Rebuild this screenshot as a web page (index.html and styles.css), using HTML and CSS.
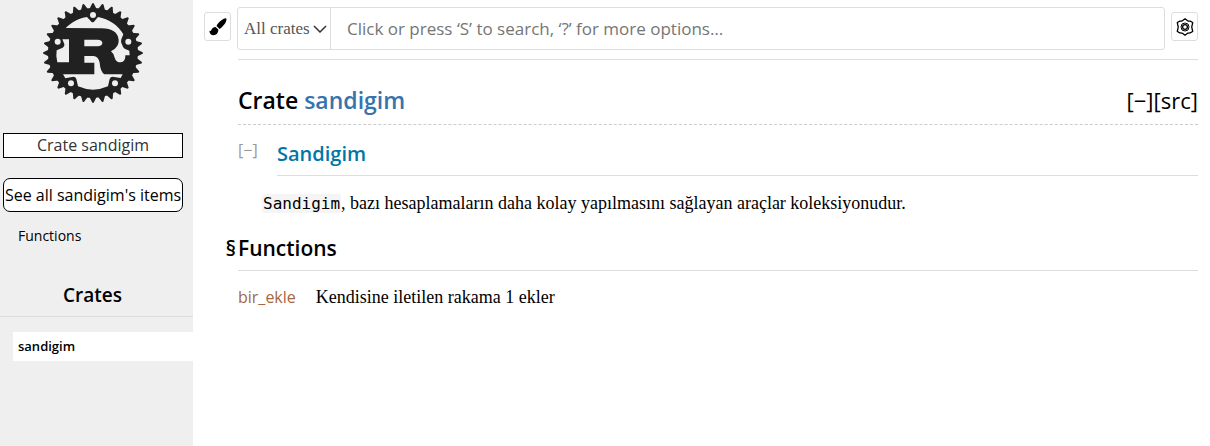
FILE: index.html
```html
<!DOCTYPE html>
<html lang="tr">
<head>
<meta charset="utf-8">
<meta name="viewport" content="width=device-width, initial-scale=1">
<title>sandigim - Rust</title>
<link rel="stylesheet" href="styles.css">
</head>
<body>
<aside class="sidebar">
  <a class="logo" href="#" aria-label="Rust">
    <svg width="100" height="100" viewBox="0 0 100 100" aria-hidden="true">
      <defs>
        <path id="tooth" d="M45.4 8 49.2.4Q50-.3 50.8.4L54.6 8z"/>
        <g id="teeth">
          <use href="#tooth"/>
          <use href="#tooth" transform="rotate(11.25 50 50)"/>
          <use href="#tooth" transform="rotate(22.5 50 50)"/>
          <use href="#tooth" transform="rotate(33.75 50 50)"/>
        </g>
      </defs>
      <g fill="#212121">
        <circle cx="50" cy="50" r="45"/>
        <use href="#teeth"/>
        <use href="#teeth" transform="rotate(45 50 50)"/>
        <use href="#teeth" transform="rotate(90 50 50)"/>
        <use href="#teeth" transform="rotate(135 50 50)"/>
        <use href="#teeth" transform="rotate(180 50 50)"/>
        <use href="#teeth" transform="rotate(225 50 50)"/>
        <use href="#teeth" transform="rotate(270 50 50)"/>
        <use href="#teeth" transform="rotate(315 50 50)"/>
      </g>
      <g fill="#efefef" transform="translate(-13 -3) scale(.33333)">
        <path d="M107 84C127 64 148 55 171 51L184 65Q188 69 192 65L204 51C237 57 264 75 280 103L274 118Q272 124 274 129L279 140Q281 145 286 147L298 152 299 166H286Q287 186 272 187 258 187 254 173 251 160 243 154 268 141 266 120 262 85 215 85z"/>
        <path d="M80 151 98 143Q105 139 103 132L97 118H117V187H82Q77 168 80 151z"/>
        <path d="M163 119H203Q217 120 217 129 217 138 203 139H163z"/>
        <path d="M163 168H190Q205 169 209 188 211 214 223 223H278L272 234 248 230Q241 230 239 237L234 259Q189 279 144 259L139 237Q137 230 130 230L106 235 99 223H193V188H163z"/>
        <circle cx="189" cy="45" r="9"/>
        <circle cx="83" cy="125" r="9"/>
        <circle cx="295" cy="125" r="9"/>
        <circle cx="123" cy="250" r="9"/>
        <circle cx="255" cy="250" r="9"/>
      </g>
    </svg>
  </a>
  <p class="location">Crate sandigim</p>
  <a class="all-items" href="#">See all sandigim's items</a>
  <a class="section-link" href="#functions">Functions</a>
  <h3 class="crates-title">Crates</h3>
  <a class="crate current" href="#">sandigim</a>
</aside>
<main class="content">
  <form class="search">
    <button class="icon-button" type="button" aria-label="Pick another theme">
      <svg width="18" height="18" viewBox="0 0 18 18" aria-hidden="true">
        <path d="M17.2.5C18 1.4 17 4.2 15 6.8 13.6 8.6 12 10.200 10.600 10.900L7.500 8C8.200 6.200 10.200 3.900 12.500 2.200 14.500.7 16.500-.2 17.200.5zM6.600 9 9.300 11.500C9.600 14.500 7.600 17.300 4.500 17.300 2 17.300.4 15.500.4 12.800 1.200 13.300 2 13 2.500 11.800 3.300 9.900 4.700 9 6.600 9z"/>
      </svg>
    </button>
    <div class="search-box">
      <select class="crate-filter" aria-label="Crate filter"><option>All crates</option></select>
      <input class="search-input" type="search" aria-label="Search" placeholder="Click or press ‘S’ to search, ‘?’ for more options…">
    </div>
    <button class="icon-button" type="button" aria-label="Change settings">
      <svg width="18" height="18" viewBox="0 0 18 18" fill="none" stroke="#000" aria-hidden="true">
        <path stroke-width="1.300" stroke-linejoin="round" d="M6.700 2.600 9 .8 11.300 2.600Q12.500 3.300 14.200 3.200L16.700 4.500 16.200 7Q15.400 9 16.200 11L16.700 13.500 14.200 14.800Q12.500 14.700 11.300 15.400L9 17.200 6.700 15.400Q5.500 14.700 3.800 14.800L1.300 13.500 1.800 11Q2.600 9 1.800 7L1.300 4.500 3.800 3.200Q5.500 3.300 6.700 2.600z"/>
        <circle cx="9" cy="9" r="4"/>
        <circle cx="9" cy="9" r="2.400" stroke-width="1.300"/>
      </svg>
    </button>
  </form>
  <section class="docs">
    <div class="heading">
      <h1>Crate <a href="#">sandigim</a></h1>
      <div class="heading-links"><a href="#">[−]</a><a href="#">[src]</a></div>
    </div>
    <div class="doc-title">
      <a class="toggle" href="#">[−]</a>
      <h2><a href="#">Sandigim</a></h2>
    </div>
    <p class="description"><code>Sandigim</code>, bazı hesaplamaların daha kolay yapılmasını sağlayan araçlar koleksiyonudur.</p>
    <h2 class="functions-title" id="functions"><a class="anchor" href="#functions">§</a>Functions</h2>
    <table class="functions">
      <tr><td><a href="#">bir_ekle</a></td><td>Kendisine iletilen rakama 1 ekler</td></tr>
    </table>
  </section>
</main>
</body>
</html>
```
FILE: styles.css
```css
* { box-sizing: border-box; }

body {
  display: flex;
  min-height: 100vh;
  margin: 0;
  background: #fff;
  color: #000;
  font: 16px/24px "Liberation Serif", serif;
}

a { color: inherit; text-decoration: none; }
h1, h2, h3, p { margin: 0; }

.sidebar {
  display: flex;
  flex-direction: column;
  flex: 0 0 193px;
  background: #efefef;
  font-family: "Open Sans", sans-serif;
}

.logo { align-self: center; height: 100px; margin: 3px 7px 0 0; }
.logo svg { display: block; }

.location {
  margin: 30px 10px 0 3px;
  border: 1px solid #000;
  background: #fff;
  color: #333;
  font-size: 16px;
  line-height: 23px;
  text-align: center;
}

.all-items {
  margin: 20px 10px 0 3px;
  border: 1px solid #000;
  border-radius: 7px;
  background: #fff;
  font-size: 16px;
  line-height: 32px;
  text-align: center;
  white-space: nowrap;
}

.section-link { margin: 12px 18px 0; font-size: 14px; }

.crates-title {
  margin-top: 35px;
  padding: 0 8px 9px 0;
  border-bottom: 1px solid #ddd;
  font-size: 19px;
  font-weight: 600;
  text-align: center;
}

.crate { margin: 15px 0 0 13px; padding: 0 5px; font-size: 13px; line-height: 29px; }
.crate.current { background: #fff; font-weight: 600; }

.content { flex: 1; min-width: 0; padding: 7px 12px 20px 11px; }

.search { display: flex; align-items: flex-start; gap: 6px; }

.icon-button {
  display: flex;
  align-items: center;
  justify-content: center;
  flex: none;
  width: 27px;
  height: 29px;
  margin-top: 5px;
  padding: 0;
  border: 1px solid #ddd;
  border-radius: 3px;
  background: #fff;
}

.search-box {
  display: flex;
  flex: 1;
  min-width: 0;
  height: 43px;
  border: 1px solid #ddd;
  border-radius: 3px;
  background: #fff;
}

.crate-filter {
  width: 93px;
  padding: 0 0 0 6px;
  border: 0;
  border-right: 1px solid #ddd;
  appearance: none;
  background: url("data:image/svg+xml,%3Csvg xmlns='http://www.w3.org/2000/svg' width='14' height='8' fill='none' stroke='%23333' stroke-width='1.5'%3E%3Cpath d='M1 1l6 6 6-6'/%3E%3C/svg%3E") no-repeat right 3px center;
  color: #555;
  font: 17px "Liberation Serif", serif;
}

.search-input {
  flex: 1;
  min-width: 0;
  padding: 0 16px;
  border: 0;
  background: none;
  font: 17px "Open Sans", sans-serif;
}
.search-input::placeholder { color: #757575; opacity: 1; }

.docs { margin: 9px 0 0 34px; border-top: 1px solid #ddd; }

.heading {
  display: flex;
  justify-content: space-between;
  padding: 24px 0 8px;
  border-bottom: 1px dashed #ccc;
  font: 22px/32px "Open Sans", sans-serif;
}
.heading h1 { font-size: 23px; font-weight: 600; }
.heading h1 a { color: #3873ad; }

.doc-title { display: flex; padding-top: 13px; font-family: "Open Sans", sans-serif; }
.toggle { width: 39px; color: #999; font-size: 16px; }
.doc-title h2 {
  flex: 1;
  padding: 3px 0 8px;
  border-bottom: 1px solid #ddd;
  color: #0076a8;
  font-size: 20px;
  font-weight: 600;
  line-height: 26px;
}

.description { padding: 15px 0 0 24px; font-size: 18px; }
.description code {
  padding: 0 1px;
  border-radius: 3px;
  background: #f5f5f5;
  font: 16px "DejaVu Sans Mono", monospace;
}

.functions-title {
  position: relative;
  margin-top: 18px;
  padding-bottom: 7px;
  border-bottom: 1px solid #ddd;
  font: 600 21px/30px "Open Sans", sans-serif;
}
.anchor { position: absolute; right: 100%; padding-right: 2px; }

.functions { margin-top: 14px; border-collapse: collapse; font-size: 18px; }
.functions td { padding: 0 20px 0 0; }
.functions td a { color: #a5673f; font: 16px "Open Sans", sans-serif; }
```
